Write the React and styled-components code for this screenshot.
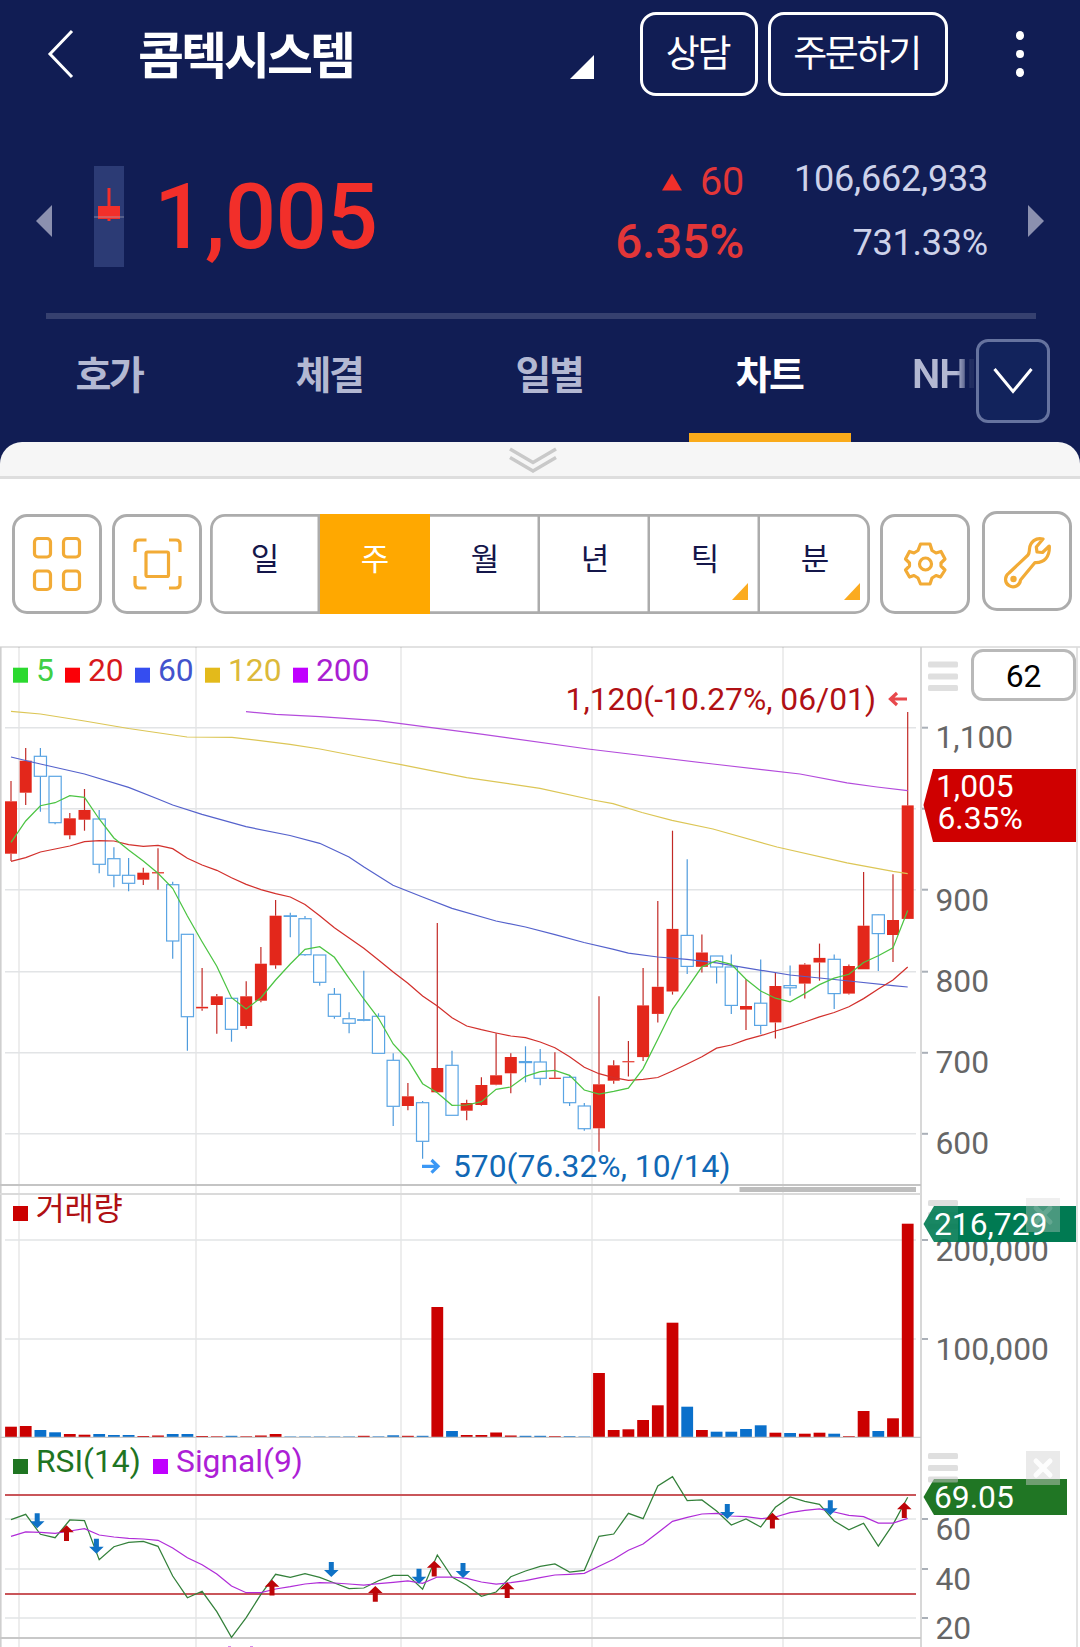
import React from "react";
import styled, { createGlobalStyle, css } from "styled-components";

const GlobalStyle = createGlobalStyle`
	* { box-sizing: border-box; }
	body {
		margin: 0;
		background: #fff;
		font-family: Roboto, "Noto Sans CJK KR", sans-serif;
	}
	button { font-family: inherit; }
`

const FIRST_X = 11;
const STEP = 14.7;
const xAt = i => FIRST_X + STEP * i;

const UP = "u";
const DOWN = "d";

// [direction, high, body top, body bottom, low]
const candles = [
	[UP, 781, 801.3, 853.7, 861], [UP, 748, 760.7, 792.7, 805], [DOWN, 748, 756.3, 776.3, 811.7],
	[DOWN, 776.3, 776.3, 822.7, 824.3], [UP, 813, 818.3, 835.3, 839.3], [UP, 789, 810, 819.7, 830.7],
	[DOWN, 810, 819, 864.3, 873.3], [DOWN, 847.3, 858.7, 875.3, 887.3], [DOWN, 858, 875.3, 883.3, 891.3],
	[UP, 867.7, 872.7, 879.7, 885], [UP, 848.3, 872.2, 873.4, 889.7], [DOWN, 881.7, 884.7, 941, 958.7],
	[DOWN, 934.3, 934.3, 1016.7, 1050.7], [UP, 968, 1006.8, 1008.4, 1010.7], [UP, 994, 996.3, 1005, 1033.7],
	[DOWN, 998.3, 998.3, 1029.3, 1041.7], [UP, 981.3, 996.3, 1026, 1028.7], [UP, 947, 963.7, 1000.7, 1002.3],
	[UP, 900, 915.7, 965.3, 968.7], [DOWN, 912.7, 915.8, 916.4, 937.3], [DOWN, 916, 918.7, 954.7, 955.7],
	[DOWN, 955, 955, 982.3, 985.7], [DOWN, 988, 994.3, 1016.3, 1018.7], [DOWN, 1012.3, 1018.7, 1023.3, 1033.3],
	[DOWN, 970.7, 1019.7, 1020.3, 1021.3], [DOWN, 1013.3, 1016.3, 1053.3, 1053.3], [DOWN, 1053.3, 1060.3, 1106.3, 1126],
	[UP, 1083, 1096.3, 1106, 1110.3], [DOWN, 1101, 1102.7, 1141.3, 1158.7], [UP, 923, 1068, 1092.3, 1092.3],
	[DOWN, 1050.7, 1065.3, 1115.3, 1115.3], [UP, 1099.7, 1103, 1110.7, 1120.3], [UP, 1077.3, 1085, 1105, 1105.7],
	[UP, 1033.3, 1075.3, 1084.7, 1085.3], [UP, 1053.3, 1057, 1073.3, 1093.3], [DOWN, 1046.3, 1061.6, 1062.6, 1082.3],
	[DOWN, 1049, 1062, 1078.3, 1085.3], [UP, 1052.3, 1077.7, 1078.9, 1078.9], [DOWN, 1075.3, 1077.3, 1102.7, 1106],
	[DOWN, 1103, 1106, 1128.7, 1130.7], [UP, 996.3, 1084.3, 1128.3, 1151.7], [UP, 1060.3, 1065.3, 1080.7, 1083.7],
	[UP, 1041, 1061.2, 1062.3, 1076.4], [UP, 967.9, 1005.4, 1057.1, 1061], [UP, 901, 986.8, 1013.9, 1022.5],
	[UP, 830.7, 928.9, 991.5, 994.6], [DOWN, 859.3, 935.4, 966.4, 973.9], [UP, 934.6, 952.5, 966.8, 972.5],
	[DOWN, 956, 956, 967, 983.6], [DOWN, 954.6, 967, 1005.4, 1013.9], [UP, 979.3, 1006, 1009.6, 1030],
	[DOWN, 959.6, 1003.2, 1025.4, 1034.3], [UP, 972.9, 986, 1022.4, 1038.6], [DOWN, 965.4, 985.6, 987.8, 995.7],
	[UP, 963.2, 964.6, 983.6, 998.6], [UP, 943.6, 957.9, 962.5, 980.7], [DOWN, 954.6, 959.3, 993.6, 1009],
	[UP, 964.6, 966, 993.6, 994.5], [UP, 872, 925.7, 969.3, 969.3], [DOWN, 914.3, 914.8, 933.6, 971],
	[UP, 874.3, 920, 935, 962], [UP, 712, 805.4, 918.9, 918.9],
];

const volumes = [
	10.3, 11, 7, 4.7, 3, 2.3, 3, 2, 2, 1, 1.5, 3, 3, 1, 0.7, 1.2, 0.7, 1.5, 3, 0.5,
	0.5, 0.5, 0.5, 0.5, 1.2, 0.6, 1.7, 1.2, 1.2, 130, 6, 2, 2, 4.5, 1.5, 1.2, 1.2, 0.8, 0.8, 0.5,
	64, 7, 7.7, 17, 31.7, 114.3, 30.3, 7, 5.3, 5.3, 8, 11.7, 4.3, 4, 3.3, 4.3, 3.3, 0.8, 26, 6,
	18.7, 213.3,
];
// volume colour compares with the previous week, so it can differ from the candle
const volumeDir = { 24: UP, 50: DOWN };

const ma5 = [
	842.3, 821, 805.7, 802.7, 795.7, 797.3, 819, 838, 850, 861, 873.3, 888.3, 916, 941.7, 966.3, 997.7,
	1009, 997.7, 980, 964, 949.3, 946.7, 957.3, 978.3, 999, 1018.3, 1044, 1060, 1083.7, 1092.7, 1105.3, 1105,
	1101.7, 1089.3, 1087, 1076.3, 1071.7, 1070.3, 1075.3, 1090, 1094, 1091.3, 1088.2, 1068.6, 1039.3, 1009.3,
	988.2, 966.8, 960.7, 964.3, 979.3, 991, 998.2, 1001.8, 993.6, 984.6, 978.2, 974.3, 962.5, 955.7, 947.9, 910.4,
];

const ma20 = [
	861.3, 857.7, 852, 849, 846, 841.7, 840.7, 841, 844.7, 846.3, 845.3, 848.7, 858.3, 865, 870.3, 877.7,
	884.3, 889.7, 893.7, 897, 904.5, 915.7, 927.7, 938, 948.3, 960, 972, 983.3, 996, 1006, 1017.7, 1026,
	1029.7, 1033, 1036, 1037.7, 1042, 1047.7, 1056.7, 1067.3, 1073.7, 1077.7, 1080.4, 1079.3, 1077.5, 1071,
	1064, 1056.8, 1048.2, 1045, 1039.6, 1035.7, 1031, 1026.8, 1022, 1016.8, 1012.5, 1006.8, 998.6, 989, 980, 967,
];

const ma60 = "11,757 40.4,764 84.5,774 128.6,787.3 158,799 172.7,805 202,814.3 246,826.7 290,835.5 319.7,843.3 349,857 364,867 393,885.3 422.6,897 452,908.3 496,921 525.5,927 555,934.7 584,942.5 613.7,949.3 628.4,953.2 657.8,957 687,959.3 716.6,962.9 746,967.9 790,975 849,981 893,985.7 907.7,987";
const ma120 = "11,711.3 40.4,714 84.5,721 128.6,728.5 187,737 232,737.3 290,744.3 320,749 376.7,760 401,764.7 466.7,777.7 540,788.3 593,800 613,803.6 642,812.5 672,820.4 713,829 777,847 847,862.9 893,871.4 907.7,873.6";
const ma200 = "246,711.7 275.7,714.3 320,716.7 378,720.7 483,734.4 588,749 713,764 800,774 847,782.9 877,787 907.7,790.7";

const rsi = [
	1519.7, 1514.3, 1534.3, 1537.7, 1520, 1520.7, 1559.7, 1546.7, 1542.3, 1541.3, 1546.3, 1576, 1597.7, 1591.3,
	1611.7, 1637.3, 1617.7, 1594.3, 1574.3, 1577.3, 1573.7, 1577.3, 1583, 1588.7, 1588, 1580.7, 1575.3, 1575.3,
	1589.3, 1555, 1577, 1585.3, 1596.3, 1592, 1576.7, 1571, 1566.3, 1564, 1572, 1570.3, 1536.3, 1534, 1513.3,
	1518.7, 1486, 1476.7, 1500.7, 1500, 1511, 1525, 1519, 1527, 1507.3, 1497, 1501.3, 1504.3, 1521, 1529.7,
	1523.3, 1546, 1524.3, 1497.3,
];

const signal = [
	1536.3, 1532, 1532.3, 1533.3, 1531, 1528.7, 1535, 1537, 1538.3, 1539, 1540.3, 1548, 1557.7, 1564.7, 1574,
	1586, 1592.7, 1592.7, 1589, 1586.7, 1584, 1582.7, 1583, 1584, 1585, 1583.7, 1582.3, 1581, 1583.3, 1577,
	1577, 1578.3, 1582, 1584, 1582.7, 1580.7, 1577.7, 1575, 1574.3, 1573.3, 1566.3, 1559.3, 1550.3, 1544,
	1532.7, 1521.3, 1517.3, 1514, 1513.3, 1516, 1516.7, 1518.7, 1517, 1512.7, 1510.3, 1509, 1512, 1515.3,
	1516.7, 1523, 1523, 1518.3,
];

const sellMarks = [[37.2, 1513.3], [96.4, 1538.7], [331.3, 1562], [419, 1568.7], [463, 1563], [727.3, 1504], [830.3, 1500.3]];
const buyMarks = [[66.5, 1525.3], [272, 1579.7], [375.3, 1586], [434.2, 1560.7], [507.2, 1582.3], [772.4, 1512.7], [904.3, 1502.3]];

const toPoints = ys => ys.map((y, i) => `${xAt(i).toFixed(1)},${y}`).join(" ");

const tabs = ["호가", "체결", "일별", "차트"];

const periods = [
	{ label: "일" },
	{ label: "주", active: true },
	{ label: "월" },
	{ label: "년" },
	{ label: "틱", more: 12 },
	{ label: "분", more: 10 },
];

const BarsIcon = ({ y }) => (
	<g fill="#c4c4c4" fillOpacity="0.55">
		{[0, 12, 23.5].map(d => <rect key={d} x="928" y={y + d} width="30" height="6" rx="1.5" />)}
	</g>
)

const CloseBox = ({ y, faint }) => (
	<g>
		<rect x="1026" y={y} width="34" height="34" fill="#d0d0d0" fillOpacity={faint ? 0.35 : 0.45} />
		<path
			d={`M1036 ${y + 10}l14 14M1050 ${y + 10}l-14 14`}
			stroke="#fff"
			strokeOpacity={faint ? 0.15 : 0.9}
			strokeWidth="5"
			strokeLinecap="round"
		/>
	</g>
)

const Columns = ({ top, bottom }) => (
	<g stroke="#000" strokeOpacity="0.09" strokeWidth="1.6">
		{[19, 196, 401, 592, 783].map(x => <line key={x} x1={x} x2={x} y1={top} y2={bottom} />)}
	</g>
)

const Rows = ({ ys }) => (
	<g>
		{ys.map(y => (
			<g key={y}>
				<line x1="5" x2="916" y1={y} y2={y} stroke="#e2e4e6" strokeWidth="1.6" />
				<line x1="922" x2="928" y1={y} y2={y} stroke="#aab0b8" strokeWidth="2" />
			</g>
		))}
	</g>
)

const Frame = ({ top, bottom }) => (
	<g stroke="#cfcfcf" strokeWidth="1.6">
		<line x1="0.8" x2="0.8" y1={top} y2={bottom} />
		<line x1="921" x2="921" y1={top} y2={bottom} />
		<line x1="1077" x2="1077" y1={top} y2={bottom} stroke="#dcdcdc" />
	</g>
)

const Legend = ({ items, y }) => (
	<g>
		{items.map(({ x, label, color, text }) => (
			<g key={label}>
				<rect x={x} y={y} width="15" height="15" fill={color} />
				<ChartText x={x + 23} y={y + 13.3} fill={text || color}>{label}</ChartText>
			</g>
		))}
	</g>
)

const PricePane = () => (
	<Plot viewBox="0 646 1080 544" $height={544}>
		<line x1="0" x2="1080" y1="647" y2="647" stroke="#d8d8d8" strokeWidth="1.4" />
		<Frame top={647} bottom={1190} />
		<Columns top={647} bottom={1190} />
		<Rows ys={[727.7, 808.7, 889.7, 971.7, 1052.8, 1133.8]} />
		<line x1="0" x2="921" y1="1185" y2="1185" stroke="#c4c4c4" strokeWidth="1.8" />
		{candles.map(([dir, high, top, bottom, low], i) => {
			const x = xAt(i);
			const up = dir === UP;
			return (
				<g key={i} stroke={up ? "#c22a26" : "#4f9bdc"} strokeWidth="1.2">
					<line x1={x} x2={x} y1={high} y2={top} />
					<line x1={x} x2={x} y1={bottom} y2={low} />
					<rect
						x={up ? x - 6 : x - 6.1}
						y={top}
						width={up ? 12 : 12.2}
						height={bottom - top}
						fill={up ? "#e3271b" : "#fff"}
						stroke={up ? "none" : "#5aa5e4"}
					/>
				</g>
			)
		})}
		<g fill="none" strokeWidth="1.25">
			<polyline points={ma200} stroke="#b44cdc" />
			<polyline points={ma120} stroke="#dcc656" />
			<polyline points={ma60} stroke="#5562cc" />
			<polyline points={toPoints(ma20)} stroke="#d2302c" />
			<polyline points={toPoints(ma5)} stroke="#4cc443" />
		</g>
		<Legend
			y={667.7}
			items={[
				{ x: 13, label: "5", color: "#2bd92f", text: "#40cf45" },
				{ x: 65, label: "20", color: "#fb0007", text: "#d8191c" },
				{ x: 135, label: "60", color: "#354df0", text: "#4353cd" },
				{ x: 205, label: "120", color: "#e3ba1b", text: "#dcb93a" },
				{ x: 293, label: "200", color: "#c000ff", text: "#a91fd2" },
			]}
		/>
		<ChartText x="876" y="709.6" fill="#b01014" textAnchor="end">1,120(-10.27%, 06/01)</ChartText>
		<path d="M907 699h-16M897 693l-6.5 6 6.5 6" fill="none" stroke="#e8484c" strokeWidth="3.2" />
		<ChartText x="453" y="1176.6" fill="#1168b5">570(76.32%, 10/14)</ChartText>
		<path d="M422 1166.3h16M431.5 1160l6.5 6.3-6.5 6.3" fill="none" stroke="#3b98f5" strokeWidth="3.2" />
		<g fill="#666">
			<ChartText x="935.5" y="748.3">1,100</ChartText>
			<ChartText x="935.5" y="910.7">900</ChartText>
			<ChartText x="935.5" y="992.3">800</ChartText>
			<ChartText x="935.5" y="1073.3">700</ChartText>
			<ChartText x="935.5" y="1154.3">600</ChartText>
		</g>
		<path d="M923.5 805L933 769H1076V842H933Z" fill="#cf0000" />
		<ChartText x="936" y="797.3" fill="#fff">1,005</ChartText>
		<ChartText x="937.5" y="829" fill="#fff">6.35%</ChartText>
		<BarsIcon y={661.5} />
		<rect x="739.5" y="1187" width="176.5" height="5" fill="#bdbdbd" />
	</Plot>
)

const VolumePane = () => (
	<Plot viewBox="0 1190 1080 248" $height={248}>
		<Frame top={1190} bottom={1438} />
		<Columns top={1190} bottom={1438} />
		<Rows ys={[1240, 1339]} />
		<rect x="739.5" y="1187" width="176.5" height="5" fill="#bdbdbd" />
		<line x1="0" x2="921" y1="1194" y2="1194" stroke="#dadada" strokeWidth="1.8" />
		{volumes.map((h, i) => (
			<rect
				key={i}
				x={xAt(i) - 5.9}
				y={1437 - h}
				width="11.8"
				height={h}
				fill={(volumeDir[i] || candles[i][0]) === UP ? "#cb0000" : "#0a70cb"}
			/>
		))}
		<line x1="0" x2="921" y1="1437.5" y2="1437.5" stroke="#c8c8c8" strokeWidth="1.4" />
		<rect x="13" y="1206" width="15" height="15" fill="#cb0000" />
		<ChartText x="35.5" y="1220.3" fill="#b01014" letterSpacing="-0.3">거래량</ChartText>
		<ChartText x="935.5" y="1260.5" fill="#666">200,000</ChartText>
		<ChartText x="935.5" y="1359.5" fill="#666">100,000</ChartText>
		<BarsIcon y={1200} />
		<path d="M923.5 1224L934 1206H1076V1242H934Z" fill="#007a52" fillOpacity="0.9" />
		<path d="M958 1206H1076V1242H958Z" fill="#007a52" />
		<CloseBox y={1198} faint />
		<ChartText x="934" y="1235" fill="#fff">216,729</ChartText>
	</Plot>
)

const RsiPane = () => (
	<Plot viewBox="0 1438 1080 209" $height={209}>
		<Frame top={1438} bottom={1647} />
		<Columns top={1438} bottom={1647} />
		<Rows ys={[1519, 1569, 1618]} />
		<line x1="0" x2="921" y1="1638" y2="1638" stroke="#c8c8c8" strokeWidth="1.8" />
		<path d="M5 1495H916M5 1594H916" stroke="#c9565a" strokeWidth="1.8" />
		<g fill="none" strokeWidth="1.25">
			<polyline points={toPoints(rsi)} stroke="#33803a" />
			<polyline points={toPoints(signal)} stroke="#b02cd8" />
		</g>
		{sellMarks.map(([x, y]) => (
			<path key={x} d={`M${x - 2.5} ${y}h5v8h4.8l-7.3 7-7.3-7h4.8z`} fill="#0f72c6" />
		))}
		{buyMarks.map(([x, y]) => (
			<path key={x} d={`M${x} ${y}l7.3 7h-4.8v8.8h-5v-8.8h-4.8z`} fill="#bd0508" />
		))}
		<Legend
			y={1459}
			items={[
				{ x: 13, label: "RSI(14)", color: "#1f7522" },
				{ x: 153, label: "Signal(9)", color: "#c000ff", text: "#ad1fd6" },
			]}
		/>
		<g fill="#666">
			<ChartText x="935.5" y="1539.5">60</ChartText>
			<ChartText x="935.5" y="1589.8">40</ChartText>
			<ChartText x="935.5" y="1638.5">20</ChartText>
		</g>
		<path d="M923.5 1497L934 1479H1067V1515H934Z" fill="#207624" />
		<BarsIcon y={1453} />
		<CloseBox y={1451} />
		<ChartText x="934" y="1508" fill="#fff">69.05</ChartText>
		<path d="M228 1646.5h3M250 1646.5h3" stroke="#d58cec" />
	</Plot>
)

const App = () => (
	<Screen>
		<GlobalStyle />

		<Header>
			<TitleBar>
				<BackIcon viewBox="0 0 28 50">
					<path d="M25 2L3 25L25 48" />
				</BackIcon>
				<StockName>콤텍시스템</StockName>
				<Corner />
				<HeaderButton $width={118}>상담</HeaderButton>
				<HeaderButton $width={180}>주문하기</HeaderButton>
				<MoreDots><i /><i /><i /></MoreDots>
			</TitleBar>

			<Quote>
				<Arrow viewBox="0 0 16 32"><path d="M16 0V32L0 16Z" /></Arrow>
				<MiniCandle viewBox="0 0 30 101">
					<rect width="30" height="101" fill="#2c3b75" />
					<path d="M15 22V55" stroke="#f22f2a" strokeWidth="3" />
					<rect x="4" y="40" width="22" height="13" fill="#f22f2a" />
					<path d="M0 51H30" stroke="#aab" strokeOpacity="0.45" strokeWidth="1.5" />
				</MiniCandle>
				<Price>1,005</Price>
				<Change>
					<Diff>
						<svg width="20" height="18" viewBox="0 0 21 18"><path d="M10.5 0L21 18H0Z" fill="#f22f2a" /></svg>
						60
					</Diff>
					<Rate>6.35%</Rate>
				</Change>
				<Amount>
					<span>106,662,933</span>
					<span>731.33%</span>
				</Amount>
				<Arrow viewBox="0 0 16 32"><path d="M0 0V32L16 16Z" /></Arrow>
			</Quote>

			<Tabs>
				{tabs.map(tab => <Tab key={tab} $active={tab === "차트"}>{tab}</Tab>)}
				<LastTab>NHI</LastTab>
				<TabMenu>
					<svg width="40" height="26" viewBox="0 0 40 26"><path d="M1.5 1L20 23.5L38.5 1" fill="none" stroke="#fff" strokeWidth="3" /></svg>
				</TabMenu>
			</Tabs>
		</Header>

		<SheetEdge>
			<Handle>
				<svg width="48" height="26" viewBox="0 0 48 26"><path d="M1 2L24 15.5L47 2M1 10.5L24 24L47 10.5" fill="none" stroke="#c9c9c9" strokeWidth="3.4" /></svg>
			</Handle>
		</SheetEdge>

		<Toolbar>
			<ToolButton>
				<ToolIcon viewBox="0 0 50 56">
					<rect x="2.5" y="2.5" width="16" height="18.5" rx="3.5" />
					<rect x="31.5" y="2.5" width="16" height="18.5" rx="3.5" />
					<rect x="2.5" y="35" width="16" height="18.5" rx="3.5" />
					<rect x="31.5" y="35" width="16" height="18.5" rx="3.5" />
				</ToolIcon>
			</ToolButton>
			<ToolButton>
				<ToolIcon viewBox="0 0 50 56">
					<path d="M3 16V8Q3 4 7 4H14.5M37 4H44Q48 4 48 8V16M48 40V48Q48 52 44 52H37M14.5 52H7Q3 52 3 48V40" />
					<rect x="14" y="16" width="22.5" height="24.5" rx="1.5" />
				</ToolIcon>
			</ToolButton>
			<Periods>
				{periods.map(({ label, active, more }) => (
					<Period key={label} $active={active}>
						{label}
						{more && <MoreCorner $right={more} />}
					</Period>
				))}
			</Periods>
			<ToolButton>
				<ToolIcon viewBox="0 0 50 56">
					<path d="M20.5 8H30L32 14.5L36 17L41 15.5L45 23L41 27V30L45 34L40.5 41L36 39.5L32 42L30 48H20.5L18 42L14 39.5L9.5 41L5.5 34L9.5 30V27L5.5 23L9.5 15.5L14 17L18 14.5Z" />
					<circle cx="25.5" cy="28" r="6" />
				</ToolIcon>
			</ToolButton>
			<ToolButton $raised>
				<ToolIcon viewBox="0 0 56 58" $wrench>
					<path d="M43 7C36 5 30 10 29.5 17C29.3 19 29.5 21 28 23L9 41A7.5 7.5 0 1 0 20.5 48L35 30.5C44 31 50 25 49.3 14L42.5 20.5L37 20L36.3 15Z" />
					<circle cx="13.5" cy="47" r="1.6" />
				</ToolIcon>
			</ToolButton>
		</Toolbar>

		<Chart>
			<PricePane />
			<VolumePane />
			<RsiPane />
			<CountBox>62</CountBox>
		</Chart>
	</Screen>
)

const Screen = styled.div`
	width: 1080px;
	height: 1647px;
	overflow: hidden;
	background: #fff;
`

const Header = styled.header`
	height: 442px;
	background: #111d54;
	color: #fff;
`

const TitleBar = styled.div`
	display: flex;
	align-items: center;
	height: 108px;
	padding-left: 47px;
`

const BackIcon = styled.svg`
	width: 28px;
	height: 50px;
	fill: none;
	stroke: #fff;
	stroke-width: 3;
`

const StockName = styled.h1`
	width: 430px;
	margin: 5px 0 0 63px;
	font-size: 50px;
	line-height: 60px;
	font-weight: 700;
	letter-spacing: -3px;
	white-space: nowrap;
`

const Corner = styled.span`
	width: 24px;
	height: 24px;
	margin: 26px 46px 0 2px;
	background: #fff;
	clip-path: polygon(100% 0, 100% 100%, 0 100%);
`

const HeaderButton = styled.button`
	width: ${p => p.$width}px;
	height: 84px;
	margin: 0 10px 1px 0;
	padding: 0 3px 6px 0;
	border: 3px solid #fff;
	border-radius: 16px;
	background: none;
	color: #fff;
	font-size: 37px;
	letter-spacing: -2.4px;
	white-space: nowrap;
`

const MoreDots = styled.div`
	display: flex;
	flex-direction: column;
	gap: 10px;
	margin-left: 58px;

	i {
		width: 8px;
		height: 8.5px;
		border-radius: 50%;
		background: #fff;
	}
`

const Quote = styled.div`
	display: flex;
	align-items: center;
	height: 211px;
	margin: 0 44px 0 46px;
	border-bottom: 6px solid #36406f;
`

const Arrow = styled.svg`
	flex: none;
	width: 16px;
	height: 32px;
	margin: 21px -8px 0 -10px;
	fill: #8b90af;
`

const MiniCandle = styled.svg`
	flex: none;
	width: 30px;
	height: 101px;
	margin: 12px 0 0 50px;
`

const Price = styled.div`
	width: 262px;
	margin: 12px 0 0 30px;
	color: #f22f2a;
	font-size: 90.5px;
	line-height: 100px;
	font-weight: 500;
	letter-spacing: -0.5px;
`

const Change = styled.div`
	display: flex;
	flex-direction: column;
	align-items: flex-end;
	width: 329px;
	margin-top: 3px;
	color: #e23638;
`

const Diff = styled.div`
	display: flex;
	align-items: center;
	gap: 18px;
	font-size: 39.5px;
	line-height: 60px;
`

const Rate = styled.div`
	font-size: 47.5px;
	line-height: 60px;
	font-weight: 500;
`

const Amount = styled.div`
	display: flex;
	flex-direction: column;
	align-items: flex-end;
	width: 244px;
	margin: 1px 50px 0 0;
	color: #cdd2ea;
	font-size: 36px;
	line-height: 64px;
	letter-spacing: -0.2px;
`

const Tabs = styled.nav`
	display: flex;
	height: 123px;
`

const Tab = styled.div`
	display: flex;
	justify-content: center;
	flex: none;
	width: 220px;
	padding: 29px 2px 0 0;
	color: #b3b8d2;
	font-size: 39px;
	line-height: 56px;
	font-weight: 700;
	letter-spacing: -2.5px;

	${p => p.$active && css`
		color: #fff;
		background: linear-gradient(#faab1b, #faab1b) no-repeat 29px 100% / 162px 9px;
	`}
`

const LastTab = styled.div`
	width: 62px;
	margin-left: 32px;
	padding-top: 28px;
	overflow: hidden;
	color: #b3b8d2;
	font-size: 40px;
	line-height: 56px;
	font-weight: 600;
	letter-spacing: -1px;
	-webkit-mask-image: linear-gradient(90deg, #000 72%, rgba(0, 0, 0, 0.1) 95%);
	mask-image: linear-gradient(90deg, #000 72%, rgba(0, 0, 0, 0.1) 95%);
`

const TabMenu = styled.button`
	display: flex;
	align-items: center;
	justify-content: center;
	width: 74px;
	height: 84px;
	margin: 20px 0 0 2px;
	padding: 0;
	border: 3px solid #66739f;
	border-radius: 12px;
	background: #12235c;
`

const SheetEdge = styled.div`
	height: 37px;
	background: #111d54;
`

const Handle = styled.div`
	display: flex;
	justify-content: center;
	height: 37px;
	padding: 5px 14px 0 0;
	border-bottom: 3px solid #dedede;
	border-radius: 22px 22px 0 0;
	background: #f6f6f6;
`

const Toolbar = styled.div`
	display: flex;
	height: 167px;
	padding: 35px 0 0 12px;
`

const ToolButton = styled.button`
	display: flex;
	align-items: center;
	justify-content: center;
	width: 90px;
	height: 100px;
	margin: ${p => p.$raised ? "-3px 0 0 2px" : "0 10px 0 0"};
	padding: 0;
	border: 3px solid #acacac;
	border-radius: 15px;
	background: #fff;
`

const ToolIcon = styled.svg`
	flex: none;
	width: ${p => p.$wrench ? 56 : 50}px;
	height: ${p => p.$wrench ? 58 : 56}px;
	margin-left: ${p => p.$wrench ? 2 : 0}px;
	fill: none;
	stroke: #f2ab36;
	stroke-width: 3.2;
	stroke-linejoin: round;
`

const Periods = styled.div`
	display: flex;
	width: 660px;
	height: 100px;
	margin: 0 10px 0 -2px;
	overflow: hidden;
	border-radius: 15px;
	box-shadow: inset 0 0 0 2.8px #acacac;
`

const Period = styled.button`
	position: relative;
	width: 110px;
	height: 100px;
	padding: 0 0 15px;
	border: 0;
	background: ${p => p.$active ? "#ffa800" : "none"};
	color: ${p => p.$active ? "#fff" : "#14164a"};
	font-size: 31px;
	box-shadow: ${p => p.$active ? "none" : "inset -2.5px 0 0 #acacac"};

	&:last-child {
		box-shadow: none;
	}
`

const MoreCorner = styled.span`
	position: absolute;
	right: ${p => p.$right}px;
	bottom: 14px;
	width: 16px;
	height: 17px;
	background: #fbab20;
	clip-path: polygon(100% 0, 100% 100%, 0 100%);
`

const Chart = styled.section`
	position: relative;
`

const Plot = styled.svg`
	display: block;
	width: 1080px;
	height: ${p => p.$height}px;
`

const ChartText = styled.text`
	font-family: Roboto, "Noto Sans CJK KR", sans-serif;
	font-size: 31.8px;
`

const CountBox = styled.div`
	position: absolute;
	top: 3px;
	right: 4px;
	width: 105px;
	height: 52px;
	border: 3px solid #b9b9b9;
	border-radius: 12px;
	background: #fff;
	color: #000;
	font-size: 31.8px;
	line-height: 49px;
	text-align: center;
`

export default App
